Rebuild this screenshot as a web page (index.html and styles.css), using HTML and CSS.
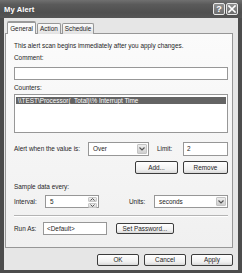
FILE: index.html
```html
<!DOCTYPE html>
<html>
<head>
<meta charset="utf-8">
<link rel="stylesheet" href="styles.css">
</head>
<body>
<div class="window">
  <div class="titlebar">
    <span class="title">My Alert</span>
    <div class="tb-buttons">
      <span class="tb-btn">?</span>
      <span class="tb-btn"><svg width="8" height="8" viewBox="0 0 8 8"><path d="M1 1L7 7M7 1L1 7" stroke="#fff" stroke-width="1.6" stroke-linecap="square"/></svg></span>
    </div>
  </div>
  <div class="client">
    <div class="tabs">
      <div class="tab tab-general active">General</div>
      <div class="tab tab-action">Action</div>
      <div class="tab tab-schedule">Schedule</div>
    </div>
    <div class="panel">
      <div class="text intro">This alert scan begins immediately after you apply changes.</div>
      <div class="text label-comment">Comment:</div>
      <div class="field comment-field"></div>
      <div class="text label-counters">Counters:</div>
      <div class="listbox">
        <div class="list-item selected">\\TEST\Processor(_Total)\% Interrupt Time</div>
      </div>
      <div class="row alert-row">
        <span class="text lbl-alert">Alert when the value is:</span>
        <div class="field combo combo-over"><span class="combo-text">Over</span><span class="drop-btn"><svg width="6" height="4" viewBox="0 0 6 4"><path d="M0.5 0.5L3 3L5.5 0.5" fill="none" stroke="#555" stroke-width="1.2"/></svg></span></div>
        <span class="text lbl-limit">Limit:</span>
        <div class="field limit-field"><span class="caret-text">2</span></div>
      </div>
      <div class="row btn-row">
        <div class="btn btn-add">Add...</div>
        <div class="btn btn-remove">Remove</div>
      </div>
      <div class="text label-sample">Sample data every:</div>
      <div class="row interval-row">
        <span class="text lbl-interval">Interval:</span>
        <div class="field spin"><span class="combo-text">5</span>
          <span class="spin-btns">
            <span class="spin-btn"><svg width="5" height="3" viewBox="0 0 5 3"><path d="M0.5 2.5L2.5 0.5L4.5 2.5" fill="none" stroke="#555" stroke-width="1"/></svg></span>
            <span class="spin-btn"><svg width="5" height="3" viewBox="0 0 5 3"><path d="M0.5 0.5L2.5 2.5L4.5 0.5" fill="none" stroke="#555" stroke-width="1"/></svg></span>
          </span>
        </div>
        <span class="text lbl-units">Units:</span>
        <div class="field combo combo-units"><span class="combo-text">seconds</span><span class="drop-btn"><svg width="6" height="4" viewBox="0 0 6 4"><path d="M0.5 0.5L3 3L5.5 0.5" fill="none" stroke="#555" stroke-width="1.2"/></svg></span></div>
      </div>
      <div class="separator"></div>
      <div class="row runas-row">
        <span class="text lbl-runas">Run As:</span>
        <div class="field runas-field"><span class="combo-text">&lt;Default&gt;</span></div>
        <div class="btn btn-password">Set Password...</div>
      </div>
    </div>
    <div class="footer">
      <div class="btn btn-footer">OK</div>
      <div class="btn btn-footer">Cancel</div>
      <div class="btn btn-footer">Apply</div>
    </div>
  </div>
</div>
</body>
</html>
```

FILE: styles.css
```css
* { box-sizing: border-box; }
html, body { margin: 0; padding: 0; }
body {
  width: 242px;
  height: 273px;
  overflow: hidden;
  font-family: "Liberation Sans", Arial, sans-serif;
  font-size: 6.4px;
  color: #1e1e1e;
  background: #fff;
}
.window {
  width: 242px;
  height: 273px;
  display: flex;
  flex-direction: column;
  background: #4c4c4c;
}
.titlebar {
  height: 18px;
  flex: none;
  display: flex;
  align-items: center;
  justify-content: space-between;
  padding: 0 4px 0 4px;
  background: linear-gradient(#707070, #5a5a5a 25%, #4f4f4f 70%, #555 100%);
}
.title {
  color: #fff;
  font-weight: bold;
  font-size: 7.6px;
  letter-spacing: 0.1px;
}
.tb-buttons { display: flex; gap: 1px; }
.tb-btn {
  width: 12px;
  height: 12px;
  border: 1px solid #e8e8e8;
  border-radius: 2px;
  background: linear-gradient(#909090, #6c6c6c);
  color: #fff;
  display: flex;
  align-items: center;
  justify-content: center;
  font-weight: bold;
  font-size: 9px;
  line-height: 1;
}
.client {
  flex: 1;
  margin: 0 4px 3px 4px;
  background: #e6e6e6;
  display: flex;
  flex-direction: column;
  padding: 3px 5px 0 1px;
}
.tabs {
  height: 13px;
  display: flex;
  align-items: flex-end;
  padding-left: 2px;
  position: relative;
  z-index: 1;
}
.tab {
  height: 11px;
  border: 1px solid #979797;
  border-bottom: none;
  border-radius: 2px 2px 0 0;
  background: linear-gradient(#fafafa, #e2e2e2);
  display: flex;
  align-items: center;
  justify-content: center;
  line-height: 8px;
  margin-left: 1px;
}
.tab.active {
  height: 13px;
  background: #fafafa;
  border-top: 2px solid #9a9a9a;
  margin-left: 0;
}
.tab-general { width: 29px; }
.tab-action { width: 24px; }
.tab-schedule { width: 32px; }
.panel {
  height: 215px;
  flex: none;
  margin-top: -1px;
  border: 1px solid #979797;
  background: linear-gradient(#fbfbfb, #f0f0f0);
  padding: 0 4px 0 8px;
}
.text { line-height: 8px; height: 8px; white-space: nowrap; }
.intro { margin-top: 8px; }
.label-comment { margin-top: 4px; }
.field {
  border: 1px solid #979797;
  background: #fff;
}
.comment-field { margin-top: 5px; height: 13px; }
.label-counters { margin-top: 4px; }
.listbox {
  margin-top: 2px;
  height: 39px;
  border: 1px solid #979797;
  background: #fff;
  padding: 2px 1px;
}
.list-item {
  height: 7px;
  line-height: 7px;
  padding-left: 2px;
  white-space: nowrap;
}
.list-item.selected { background: #646464; color: #fff; }
.row { display: flex; align-items: center; }
.alert-row { margin-top: 9px; height: 14px; }
.lbl-alert { width: 74px; }
.combo {
  display: flex;
  align-items: stretch;
  height: 14px;
  padding: 1px;
}
.combo-text { flex: 1; line-height: 8px; padding: 1px 0 0 3px; white-space: nowrap; }
.drop-btn {
  width: 10px;
  border-radius: 1px;
  background: linear-gradient(#ededed, #cfcfcf);
  border: 1px solid #c4c4c4;
  display: flex;
  align-items: center;
  justify-content: center;
}
.combo-over { width: 61px; }
.lbl-limit { margin-left: 8px; width: 26px; }
.limit-field { flex: 1; height: 14px; padding: 1px; display: flex; }
.caret-text { padding: 1px 0 0 2px; line-height: 8px; border-left: 0; }
.btn-row { margin-top: 5px; height: 13px; justify-content: flex-end; gap: 5px; }
.btn {
  border: 1px solid #3c3c3c;
  border-radius: 2px;
  background: linear-gradient(#ffffff, #f0f0f0 70%, #d8d8d8);
  display: flex;
  align-items: center;
  justify-content: center;
  white-space: nowrap;
  line-height: 8px;
}
.btn-add { width: 43px; height: 13px; }
.btn-remove { width: 45px; height: 13px; }
.label-sample { margin-top: 9px; }
.interval-row { margin-top: 4px; height: 13px; }
.lbl-interval { width: 31px; }
.spin { width: 54px; height: 13px; display: flex; padding: 1px; }
.spin-btns { width: 9px; display: flex; flex-direction: column; gap: 1px; }
.spin-btn {
  flex: 1;
  background: linear-gradient(#f0f0f0, #d4d4d4);
  border: 1px solid #c8c8c8;
  border-radius: 1px;
  display: flex;
  align-items: center;
  justify-content: center;
}
.lbl-units { margin-left: 30px; width: 25px; }
.combo-units { flex: 1; height: 13px; }
.separator {
  margin-top: 7px;
  height: 2px;
  border-top: 1px solid #b4b4b4;
  border-bottom: 1px solid #ffffff;
}
.runas-row { margin-top: 5px; height: 13px; }
.lbl-runas { width: 29px; }
.runas-field { width: 64px; height: 13px; display: flex; align-items: center; }
.runas-field .combo-text { padding: 0 0 0 3px; }
.btn-password { margin-left: 9px; width: 58px; height: 11px; }
.footer {
  margin-top: 6px;
  display: flex;
  justify-content: flex-end;
  gap: 5px;
}
.btn-footer { width: 42px; height: 12px; }
```
